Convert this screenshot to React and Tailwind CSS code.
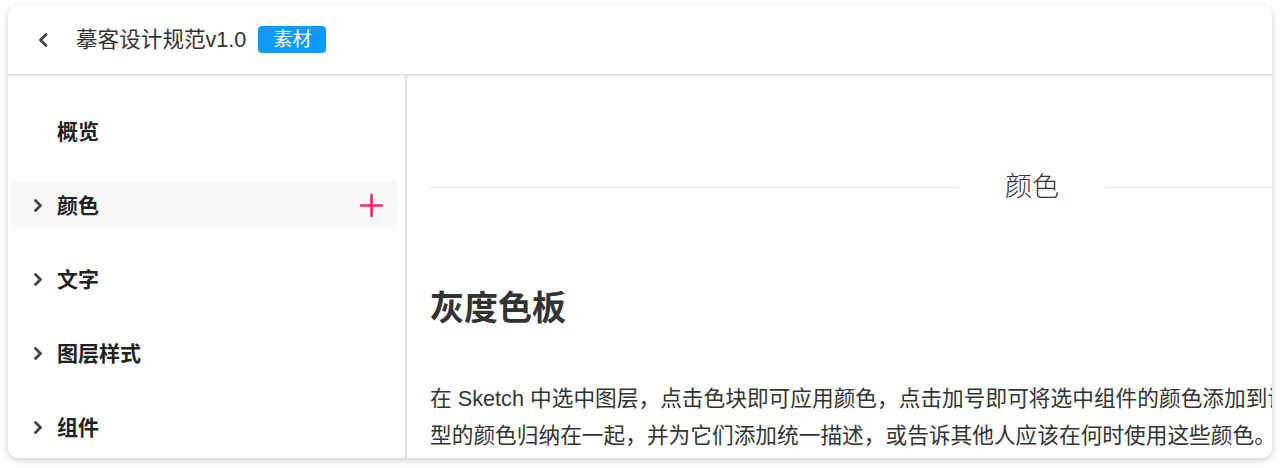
import React from 'react';

const font = { fontFamily: '"Liberation Sans", "Noto Sans CJK SC", sans-serif' };

const navItems = [
  { label: '概览', arrow: false },
  { label: '颜色', arrow: true, active: true },
  { label: '文字', arrow: true },
  { label: '图层样式', arrow: true },
  { label: '组件', arrow: true },
];

function Chevron({ dir = 'right', className }) {
  const d = dir === 'right' ? 'M2.5 1.5 L7.5 6.5 L2.5 11.5' : 'M8 1.5 L2.5 7 L8 12.5';
  const box = dir === 'right' ? '0 0 10 13' : '0 0 10 14';
  return (
    <svg viewBox={box} className={className} fill="none" stroke="#444" strokeWidth="2.8" strokeLinecap="round" strokeLinejoin="round">
      <path d={d} />
    </svg>
  );
}

function NavRow({ item }) {
  return (
    <div className={`h-[49px] ml-[3px] mr-[6px] rounded-md flex items-center pl-[22px] pr-[15px] ${item.active ? 'bg-[#f9f9f9]' : ''}`}>
      <div className="w-[24px] flex items-center">
        {item.arrow && <Chevron className="w-[10px] h-[13px]" />}
      </div>
      <span className="text-[21px] font-semibold text-[#222] leading-none">{item.label}</span>
      {item.active && (
        <svg viewBox="0 0 24 24" className="ml-auto w-[25px] h-[25px]" stroke="#ff2a6c" strokeWidth="2.6" strokeLinecap="round">
          <path d="M12 2v20M2 12h20" />
        </svg>
      )}
    </div>
  );
}

export default function App() {
  return (
    <div className="w-[1280px] h-[468px] bg-white pt-[5px] pl-2 overflow-hidden" style={font}>
      <div className="w-[1264px] h-[453px] rounded-[10px] bg-white overflow-hidden flex flex-col shadow-[0_2px_7px_rgba(0,0,0,0.2)]">
        {/* header */}
        <div className="relative z-10 h-[70px] shrink-0 flex items-center pl-[30px] border-b border-[#dcdcdc] shadow-[0_1px_3px_rgba(0,0,0,0.1)]">
          <Chevron dir="left" className="w-[10px] h-[14px]" />
          <span className="ml-[28px] text-[21.6px] text-[#333] leading-none">摹客设计规范v1.0</span>
          <span className="ml-[12px] h-[27px] px-[15px] rounded-[4px] bg-[#0d9bff] text-white text-[19px] leading-[27px]">素材</span>
        </div>

        <div className="flex-1 flex min-h-0">
          {/* sidebar */}
          <div className="w-[399px] shrink-0 border-r-2 border-[#e4e4e4] pt-[32px] flex flex-col gap-[25px]">
            {navItems.map((item) => (
              <NavRow key={item.label} item={item} />
            ))}
          </div>

          {/* content */}
          <div className="flex-1 overflow-hidden pl-[23px]">
            <div className="w-[1204px] shrink-0 pt-[92px]">
              <div className="flex items-center h-[40px]">
                <div className="flex-1 h-px bg-[#e6e6e6]" />
                <span className="px-[46px] text-[27px] font-light text-[#333] leading-[40px]">颜色</span>
                <div className="flex-1 h-px bg-[#e6e6e6]" />
              </div>
              <h2 className="mt-[77px] text-[34px] font-bold text-[#333] leading-[48px]">灰度色板</h2>
              <p className="mt-[48px] text-[21.7px] text-[#333] leading-[37px] whitespace-nowrap">
                在 Sketch 中选中图层，点击色块即可应用颜色，点击加号即可将选中组件的颜色添加到设计规范中，也可以将同一类
                <br />
                型的颜色归纳在一起，并为它们添加统一描述，或告诉其他人应该在何时使用这些颜色。
              </p>
            </div>
          </div>
        </div>
      </div>
    </div>
  );
}
